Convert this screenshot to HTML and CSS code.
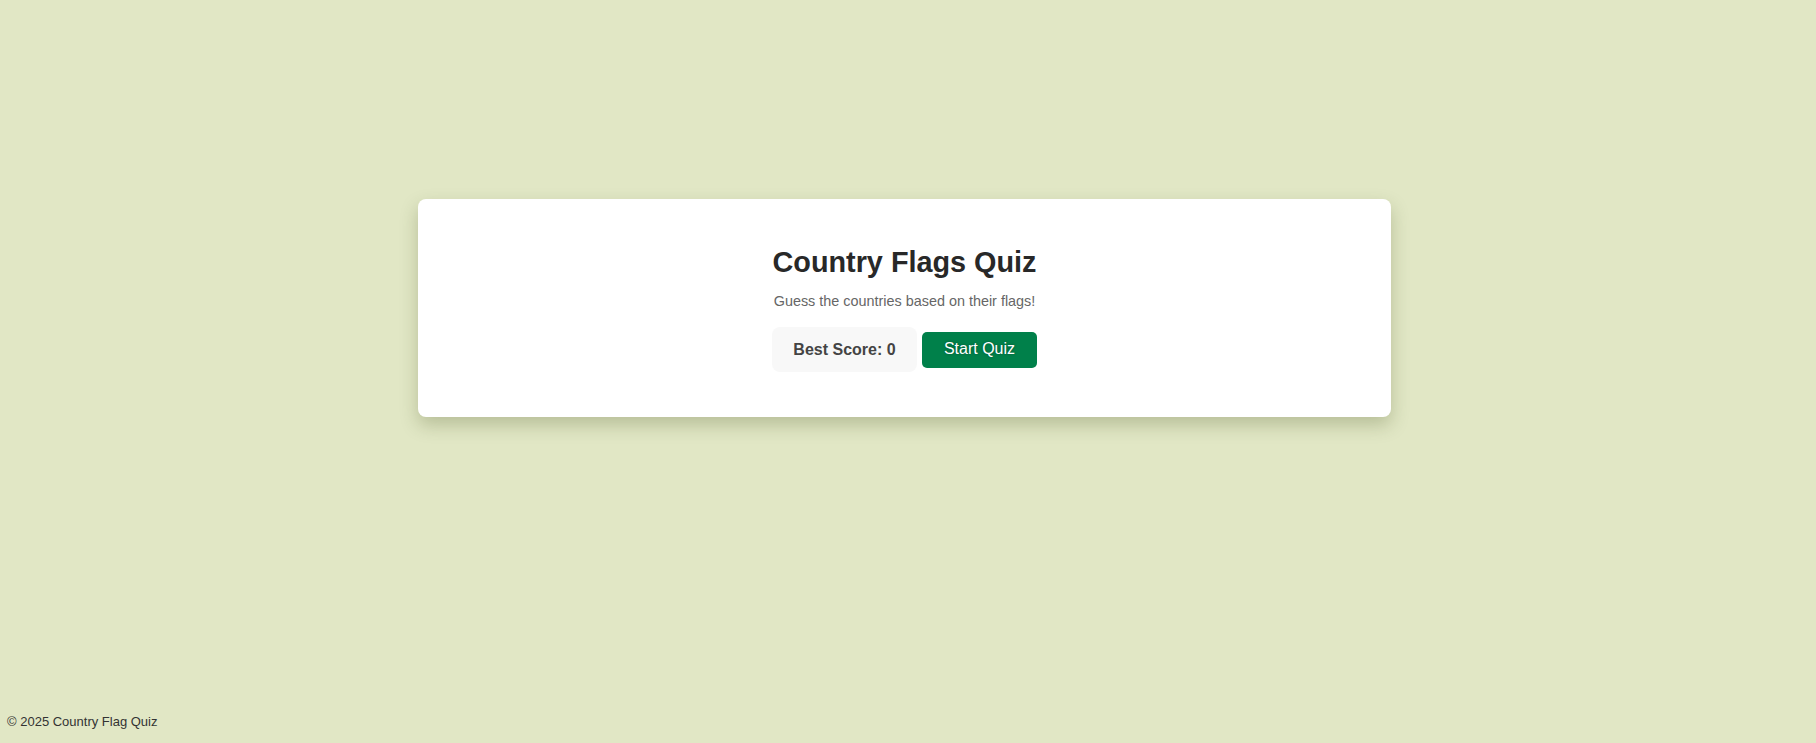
FILE: index.html
```html
<!DOCTYPE html>
<html lang="en">
<head>
<meta charset="utf-8">
<title>Country Flags Quiz</title>
<link rel="stylesheet" href="styles.css">
</head>
<body>
<main class="main">
  <section class="card">
    <h1 class="title">Country Flags Quiz</h1>
    <p class="subtitle">Guess the countries based on their flags!</p>
    <div class="actions">
      <div class="best">Best Score: 0</div>
      <button class="start" type="button">Start Quiz</button>
    </div>
  </section>
</main>
<footer class="footer">© 2025 Country Flag Quiz</footer>
</body>
</html>
```

FILE: styles.css
```css
html, body {
  margin: 0;
  padding: 0;
}
body {
  background: #e1e7c5;
  font-family: "Liberation Sans", Arial, sans-serif;
  min-height: 100vh;
  display: flex;
  flex-direction: column;
  color: #333;
}
.main {
  padding-top: 199px;
  padding-right: 7px;
  display: flex;
  justify-content: center;
}
.card {
  width: 973px;
  box-sizing: border-box;
  background: #fff;
  border-radius: 8px;
  box-shadow: 0 8px 18px rgba(60, 70, 20, 0.25);
  padding: 45px 20px;
  display: flex;
  flex-direction: column;
  align-items: center;
}
.title {
  margin: 2px 0 0;
  font-size: 28.8px;
  font-weight: 700;
  color: #282828;
  line-height: 33px;
}
.subtitle {
  margin: 14px 0 0;
  font-size: 14.4px;
  color: #666;
  line-height: 16px;
}
.actions {
  margin-top: 18px;
  display: flex;
  align-items: center;
  gap: 5px;
}
.best {
  background: #f8f8f8;
  border-radius: 8px;
  width: 145px;
  height: 45px;
  display: flex;
  align-items: center;
  justify-content: center;
  font-size: 16px;
  font-weight: 700;
  color: #444;
}
.start {
  background: #00804a;
  color: #fff;
  border: none;
  border-radius: 5px;
  width: 115px;
  height: 36px;
  font-family: "Liberation Sans", Arial, sans-serif;
  font-size: 16px;
  padding: 0 0 1px;
  text-shadow: 0 0 3px rgba(0, 0, 0, 0.35);
  cursor: pointer;
}
.footer {
  margin-top: auto;
  padding: 0 7px 14px;
  font-size: 13px;
  color: #333;
  line-height: 15px;
}
```
